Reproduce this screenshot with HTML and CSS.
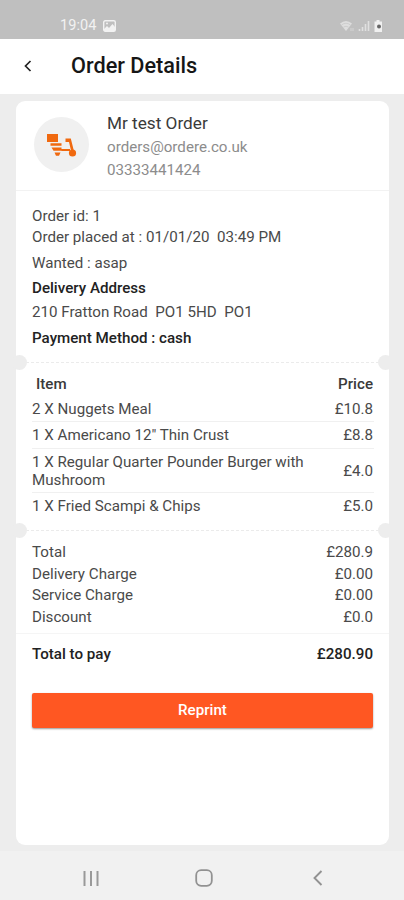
FILE: index.html
```html
<!DOCTYPE html>
<html lang="en">
<head>
<meta charset="utf-8">
<title>Order Details</title>
<link rel="stylesheet" href="styles.css">
</head>
<body>
<div class="status">
  <span class="clock">19:04</span>
  <svg class="photo" width="13" height="12" viewBox="0 0 13 12"><rect x=".7" y=".7" width="11.600" height="10.600" rx="1.500" fill="none" stroke="#f2f2f2" stroke-width="1.400"/><path fill="#f2f2f2" d="M1 9l3-3 2 2 3.500-4L12 7v4H1z"/><circle cx="4" cy="3.500" r="1" fill="#f2f2f2"/></svg>
  <svg class="signals" width="46" height="14" viewBox="0 0 46 14"><path fill="#dedede" d="M1 4.500Q7 -.5 13 4.500L7 12z"/><path d="M2.500 6Q7 2.500 11.500 6M4.500 8Q7 6.500 9.500 8" fill="none" stroke="#c6c6c6" stroke-width=".7"/><path d="M12 9v3M14 9v3" stroke="#d5d5d5"/><path d="M20.500 10v2M23.500 8v4M26.500 5v7M29.500 2v10" stroke="#e0e0e0" stroke-width="1.600"/><path fill="#f0f0f0" d="M37.500 1h3v1.500H43V13h-7.500V2.500h2z"/><circle cx="40" cy="7.500" r="2" fill="#666"/></svg>
</div>
<header class="bar">
  <svg class="back" width="8" height="12" viewBox="0 0 8 12"><path d="M6.500 1L1.500 6l5 5" fill="none" stroke="#222" stroke-width="1.700"/></svg>
  <h1>Order Details</h1>
</header>
<main class="card">
  <section class="customer">
    <div class="avatar">
      <svg width="32" height="26" viewBox="0 0 32 26"><g fill="#f0690f"><path d="M1 2h11v8H1zM4.500 11.200h11v2.600h-11zM5.500 15.600h10v1.400H24v2H15.500v-.2h-8z"/><path d="M8.500 20.500h6l-1.500 3.200h-3z"/><path d="M19.500 6.500h5.300l3 12h-2.800l-2-8.500h-3.500z"/><circle cx="26.500" cy="21" r="3.600"/></g></svg>
    </div>
    <div class="who">
      <div class="name">Mr test Order</div>
      <div class="contact mail">orders@ordere.co.uk</div>
      <div class="contact phone">03333441424</div>
    </div>
  </section>
  <section class="info">
    <p class="h21"><span>Order id: 1</span></p>
    <p class="h22"><span>Order placed at : 01/01/20&nbsp; 03:49 PM</span></p>
    <p class="h29"><span>Wanted : asap</span></p>
    <p class="h21 strong"><span>Delivery Address</span></p>
    <p class="h27"><span>210 Fratton Road&nbsp; PO1 5HD&nbsp; PO1</span></p>
    <p class="h25 strong"><span>Payment Method : cash</span></p>
  </section>
  <div class="tear"></div>
  <section class="items">
    <div class="row head"><span>Item</span><span>Price</span></div>
    <div class="row first"><span>2 X Nuggets Meal</span><span>£10.8</span></div>
    <div class="row"><span>1 X Americano 12" Thin Crust</span><span>£8.8</span></div>
    <div class="row tall"><span>1 X Regular Quarter Pounder Burger with<br>Mushroom</span><span>£4.0</span></div>
    <div class="row last"><span>1 X Fried Scampi &amp; Chips</span><span>£5.0</span></div>
  </section>
  <div class="tear"></div>
  <section class="sums">
    <div class="sum"><span>Total</span><span>£280.9</span></div>
    <div class="sum"><span>Delivery Charge</span><span>£0.00</span></div>
    <div class="sum"><span>Service Charge</span><span>£0.00</span></div>
    <div class="sum"><span>Discount</span><span>£0.0</span></div>
  </section>
  <div class="pay"><span>Total to pay</span><span>£280.90</span></div>
  <button class="reprint">Reprint</button>
</main>
<nav class="nav">
  <svg width="16" height="15" viewBox="0 0 16 15"><path d="M1.500 0v15M8 0v15M14.500 0v15" stroke="#999" stroke-width="2"/></svg>
  <svg class="home" width="18" height="18" viewBox="0 0 18 18"><rect x="1.200" y="1.200" width="15.600" height="15.600" rx="5" fill="none" stroke="#929292" stroke-width="1.800"/></svg>
  <svg width="10" height="16" viewBox="0 0 10 16"><path d="M8.500 1L1.500 8l7 7" fill="none" stroke="#929292" stroke-width="1.900"/></svg>
</nav>
</body>
</html>
```
FILE: styles.css
```css
* { box-sizing: border-box; }
body {
  margin: 0;
  width: 404px;
  height: 900px;
  overflow: hidden;
  display: flex;
  flex-direction: column;
  background: #ededed;
  color: #4a4a4a;
  font: 15.15px/18px Roboto, sans-serif;
}
p, h1 { margin: 0; }
svg { display: block; flex: none; }
.status {
  height: 39px;
  flex: none;
  background: #bfbfbf;
  display: flex;
  align-items: center;
  padding: 13px 19px 0 60px;
}
.clock { width: 43px; color: #f2f2f2; font-size: 14.5px; letter-spacing: .1px; white-space: nowrap; }
.signals { margin-left: auto; }
.bar {
  height: 55px;
  flex: none;
  background: #fff;
  display: flex;
  align-items: center;
  padding: 0 0 1px 24px;
}
h1 { margin-left: 39px; font-size: 21.7px; line-height: 26px; font-weight: 500; color: #161616; }
.card {
  margin: 7px 15px 0 16px;
  height: 744px;
  flex: none;
  background: #fff;
  border-radius: 9px;
}
.customer {
  height: 90px;
  display: flex;
  border-bottom: 1px solid #f2f2f2;
  padding-left: 18px;
}
.avatar {
  width: 55px;
  height: 55px;
  margin: 16px 18px 0 0;
  border-radius: 50%;
  background: #f0f0f0;
  display: flex;
  align-items: center;
  justify-content: center;
}
.who { padding-top: 11px; }
.name { font-size: 17.2px; line-height: 22px; color: #3a3a3a; }
.contact { line-height: 23px; color: #8c8c8c; }
.mail { margin-top: 2px; }
.info { height: 171px; padding: 14px 16px 0; }
.info p { display: flex; align-items: center; white-space: nowrap; }
.h21 { height: 21px; }
.h22 { height: 22px; }
.h29 { height: 29px; }
.h27 { height: 27px; }
.h25 { height: 25px; }
.info .strong { font-weight: 500; color: #222; }
.tear {
  height: 0;
  margin: 0 10px;
  border-top: 1px dashed #ebebeb;
  position: relative;
}
.tear::before, .tear::after {
  content: "";
  position: absolute;
  top: -8px;
  width: 15px;
  height: 15px;
  border-radius: 50%;
  background: #ededed;
}
.tear::before { left: -14px; }
.tear::after { right: -14px; }
.items { height: 167px; padding: 8px 15px 0 16px; }
.row {
  height: 27px;
  display: flex;
  align-items: center;
  justify-content: space-between;
  border-bottom: 1px solid #f0f0f0;
}
.row > :last-child, .sum > :last-child, .pay > :last-child { margin-right: 1px; }
.row.head { height: 25px; border: 0; padding-left: 4px; font-weight: 500; color: #3a3a3a; }
.row.first { height: 26px; }
.row.tall { height: 44px; }
.row.last { height: 26px; border: 0; }
.sums { height: 103px; padding: 10px 15px 0 16px; border-bottom: 1px solid #f5f5f5; }
.sum { height: 21.7px; display: flex; align-items: center; justify-content: space-between; }
.pay {
  height: 39px;
  padding: 0 15px 0 16px;
  display: flex;
  align-items: center;
  justify-content: space-between;
  font-weight: 500;
  color: #222;
}
.reprint {
  display: block;
  width: 341px;
  height: 35px;
  margin: 20px 0 0 16px;
  padding: 0 0 1px;
  border: 0;
  border-radius: 2px;
  background: #ff5722;
  color: #fff;
  font: 500 15.15px/18px Roboto, sans-serif;
  box-shadow: 0 1px 2px rgba(0, 0, 0, .4);
}
.nav {
  height: 49px;
  margin-top: auto;
  flex: none;
  background: #f1f1f1;
  display: flex;
  align-items: center;
  justify-content: space-between;
  padding: 5px 81px 0 83px;
}
.home { margin-right: 5px; }
```
